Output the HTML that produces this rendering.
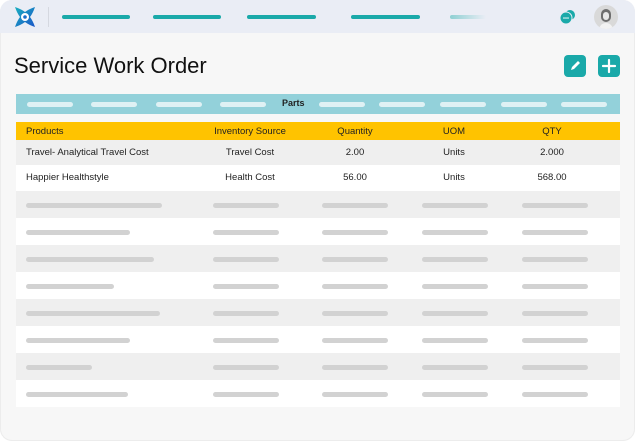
<!DOCTYPE html>
<html><head><style>
*{margin:0;padding:0;box-sizing:border-box}
body{width:635px;height:442px;background:#fff;font-family:"Liberation Sans",sans-serif;position:relative;overflow:hidden}
.card{position:absolute;left:0;top:0;width:635px;height:441px;background:#f7f7f7;border-radius:12px;overflow:hidden;box-shadow:0 0 0 1px #ececec inset}
.top{position:absolute;left:0;top:0;width:100%;height:33px;background:#eaedf5}
.nb{position:absolute;top:15px;height:4px;border-radius:2px;background:#1aa9a9}
.a{position:absolute}
.row{position:absolute;left:16px;width:604px}
.t{position:absolute;font-size:9.5px;color:#222;white-space:nowrap;transform:translateX(-50%)}
.ph{position:absolute;height:5px;border-radius:3px;background:#d2d2d2}
.pb{position:absolute;top:8px;height:5px;width:46px;border-radius:3px;background:#dff1f4}
</style></head><body>
<div class="card">
<div class="top">
 <svg class="a" style="left:13px;top:5px" width="24" height="24" viewBox="0 0 24 24">
  <defs><linearGradient id="g" x1="0" y1="0" x2="1" y2="1"><stop offset="0" stop-color="#1ab0c0"/><stop offset="1" stop-color="#1a55c8"/></linearGradient></defs>
  <path d="M2 2 Q8 4 12 7 Q16 4 22 2 Q20 8 17 12 Q20 16 22 22 Q16 20 12 17 Q8 20 2 22 Q4 16 7 12 Q4 8 2 2Z" fill="url(#g)"/>
  <circle cx="12" cy="12" r="4" fill="#fff"/><circle cx="12" cy="12" r="1.8" fill="#1a6ec8"/>
 </svg>
 <div class="a" style="left:48px;top:7px;width:1px;height:20px;background:#d5d8e0"></div>
 <div class="nb" style="left:62px;width:68px"></div>
 <div class="nb" style="left:153px;width:68px"></div>
 <div class="nb" style="left:247px;width:69px"></div>
 <div class="nb" style="left:351px;width:69px"></div>
 <div class="nb" style="left:450px;width:36px;background:linear-gradient(90deg,#8fd0d3,#eaedf5)"></div>
 <svg class="a" style="left:559px;top:8px" width="18" height="18" viewBox="0 0 18 18">
  <circle cx="11" cy="7" r="5" fill="#1aa9a9"/><circle cx="7" cy="10" r="6" fill="#1aa9a9" stroke="#eaedf5" stroke-width="1"/>
  <circle cx="5" cy="10" r=".8" fill="#fff"/><circle cx="7" cy="10" r=".8" fill="#fff"/><circle cx="9" cy="10" r=".8" fill="#fff"/>
 </svg>
 <div class="a" style="left:594px;top:5px;width:24px;height:24px;border-radius:50%;background:#d9d9d9;overflow:hidden">
  <div class="a" style="left:7px;top:4px;width:10px;height:13px;border-radius:5px;background:#6e6e6e"></div>
  <div class="a" style="left:9px;top:7px;width:6px;height:8px;border-radius:3px;background:#e8e8e8"></div>
  <div class="a" style="left:5px;top:18px;width:14px;height:8px;border-radius:7px 7px 0 0;background:#f2f2f2"></div>
 </div>
</div>
<div class="a" style="left:14px;top:53px;font-size:22px;color:#111">Service Work Order</div>
<div class="a" style="left:564px;top:55px;width:22px;height:22px;border-radius:4px;background:#1aa9a9">
 <svg width="22" height="22" viewBox="0 0 22 22"><path d="M7 15 L8 12 L14 6 L16 8 L10 14Z" fill="#fff"/></svg></div>
<div class="a" style="left:598px;top:55px;width:22px;height:22px;border-radius:4px;background:#1aa9a9">
 <svg width="22" height="22" viewBox="0 0 22 22"><path d="M11 5v12M5 11h12" stroke="#fff" stroke-width="2.2" stroke-linecap="round"/></svg></div>
<div class="row" style="top:94px;height:20px;background:#93d1da">
 <div class="pb" style="left:11px"></div><div class="pb" style="left:75px"></div><div class="pb" style="left:140px"></div><div class="pb" style="left:204px"></div>
 <div class="a" style="left:266px;top:4px;font-size:9px;font-weight:bold;color:#222">Parts</div>
 <div class="pb" style="left:303px"></div><div class="pb" style="left:363px"></div><div class="pb" style="left:424px"></div><div class="pb" style="left:485px"></div><div class="pb" style="left:545px"></div>
</div>
<div class="row" style="top:122px;height:18px;background:#ffc300">
 <div class="t" style="left:10px;top:4px;transform:none">Products</div>
 <div class="t" style="left:234px;top:4px">Inventory Source</div>
 <div class="t" style="left:339px;top:4px">Quantity</div>
 <div class="t" style="left:438px;top:4px">UOM</div>
 <div class="t" style="left:536px;top:4px">QTY</div>
</div>
<div class="row" style="top:140px;height:25px;background:#efefef">
 <div class="t" style="left:10px;top:7px;transform:none">Travel- Analytical Travel Cost</div>
 <div class="t" style="left:234px;top:7px">Travel Cost</div>
 <div class="t" style="left:339px;top:7px">2.00</div>
 <div class="t" style="left:438px;top:7px">Units</div>
 <div class="t" style="left:536px;top:7px">2.000</div>
</div>
<div class="row" style="top:165px;height:26px;background:#fff">
 <div class="t" style="left:10px;top:7px;transform:none">Happier Healthstyle</div>
 <div class="t" style="left:234px;top:7px">Health Cost</div>
 <div class="t" style="left:339px;top:7px">56.00</div>
 <div class="t" style="left:438px;top:7px">Units</div>
 <div class="t" style="left:536px;top:7px">568.00</div>
</div>
<div id="rows"></div>
</div>
<script>
var w=[136,104,128,88,134,104,66,102],h='';
for(var i=0;i<8;i++){var y=191+i*27;
h+='<div class="row" style="top:'+y+'px;height:27px;background:'+(i%2?'#fff':'#efefef')+'">'+
'<div class="ph" style="left:10px;top:12px;width:'+w[i]+'px"></div>'+
'<div class="ph" style="left:197px;top:12px;width:66px"></div>'+
'<div class="ph" style="left:306px;top:12px;width:66px"></div>'+
'<div class="ph" style="left:406px;top:12px;width:66px"></div>'+
'<div class="ph" style="left:506px;top:12px;width:66px"></div></div>';}
document.getElementById('rows').outerHTML=h;
</script>
</body></html>
